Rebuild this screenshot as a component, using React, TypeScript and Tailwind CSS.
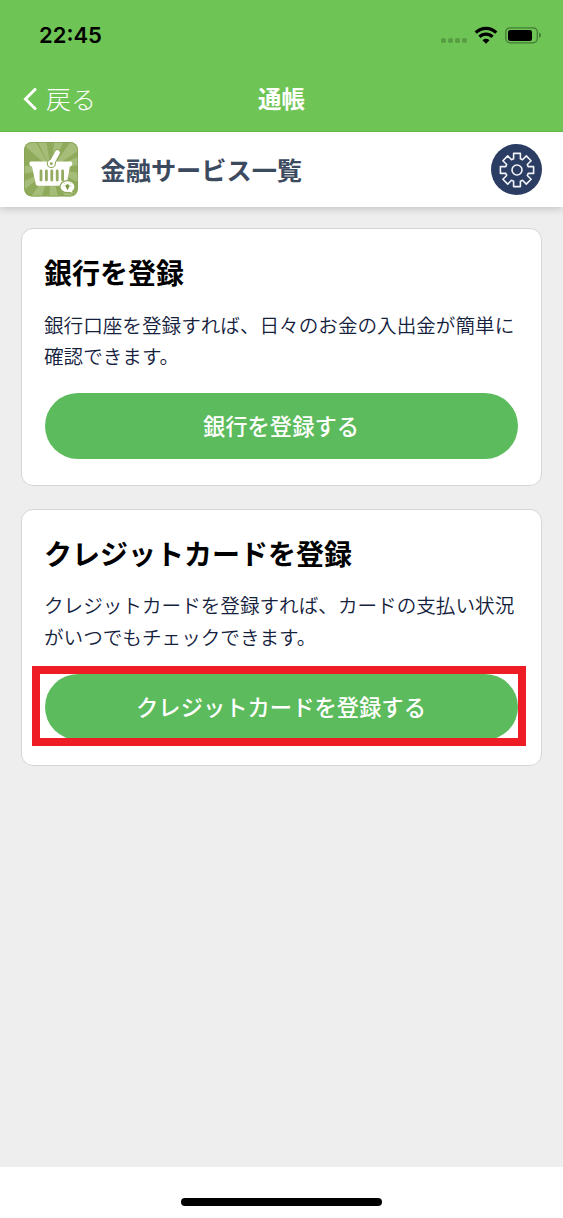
import React from "react";

const services = [
  {
    title: "銀行を登録",
    lines: ["銀行口座を登録すれば、日々のお金の入出金が簡単に", "確認できます。"],
    button: "銀行を登録する",
    highlighted: false,
  },
  {
    title: "クレジットカードを登録",
    lines: ["クレジットカードを登録すれば、カードの支払い状況", "がいつでもチェックできます。"],
    button: "クレジットカードを登録する",
    highlighted: true,
  },
];

function StatusIcons() {
  return (
    <svg width="102" height="20" viewBox="0 0 102 20">
      <g fill="#579f42">
        <rect x="1" y="13" width="5" height="5" rx="1.8" />
        <rect x="8" y="13" width="5" height="5" rx="1.8" />
        <rect x="15" y="13" width="5" height="5" rx="1.8" />
        <rect x="22" y="13" width="5" height="5" rx="1.8" />
      </g>
      <g fill="none" stroke="#000" strokeWidth="3.2">
        <path d="M35.7 7.6a14.6 14.6 0 0 1 20.6 0" />
        <path d="M39.5 11.9a9.2 9.2 0 0 1 13 0" />
      </g>
      <path d="M42.5 15.3a5 5 0 0 1 7 0L46 18.800z" fill="#000" />
      <rect x="65.8" y="2.8" width="31.5" height="15" rx="4.2" fill="none" stroke="#447b34" strokeWidth="1.3" />
      <rect x="68" y="5" width="24" height="11" rx="2.2" fill="#000" />
      <path d="M99 7.6c2.6.8 2.6 4.6 0 5.4z" fill="#447b34" />
    </svg>
  );
}

function BasketIcon() {
  return (
    <svg width="54" height="55" viewBox="0 0 54 55">
      <defs>
        <clipPath id="tile">
          <rect width="54" height="54.5" rx="8" />
        </clipPath>
      </defs>
      <g clipPath="url(#tile)">
        <rect width="54" height="55" fill="#90aa5c" />
        <path
          d="M27 27L-6-2V-14L4-14zM27 27L10-8L21-8zM27 27L31-6H42zM27 27L51-6L64 2zM27 27L62 11V22zM27 27L62 32V44zM27 27L58 58L46 64zM27 27L36 62H25zM27 27L15 62L3 60zM27 27L-8 54V43zM27 27L-8 33V22z"
          fill="#a5bd78"
        />
        <rect x="0.5" y="0.5" width="53" height="53.5" rx="7.5" fill="none" stroke="#849d53" strokeOpacity="0.6" />
      </g>
      <path d="M7 19.400h39.500c1.500 0 2 .9 1.800 2.400-.3 1.800-1 2.500-2.400 2.700l-3.200 17.300c-.3 1.500-1 2-2.300 2H14c-1.300 0-2-.5-2.300-2L8 24.500C6.500 24.300 5.700 23.600 5.400 21.800c-.2-1.500.2-2.400 1.600-2.400z" fill="#fff" />
      <path d="M17 29v9M22.400 29v9M27.800 29v9M33.200 29v9M38.600 29v9" stroke="#94ab61" strokeWidth="2.8" strokeLinecap="round" />
      <path d="M28 20.500L33.500 10.500" stroke="#8fa85b" strokeWidth="6.6" strokeLinecap="round" />
      <circle cx="27.3" cy="21.400" r="4.600" fill="#8fa85b" />
      <path d="M28 20.500L33.500 10.500" stroke="#fff" strokeWidth="4.8" strokeLinecap="round" />
      <circle cx="27.3" cy="21.400" r="3.5" fill="#fff" />
      <circle cx="27.3" cy="21.700" r="1.4" fill="#8fa85b" />
      <path d="M43.500 38.700c4.300 0 7.500 2.700 7.500 6 0 1.900-.9 3.400-2.300 4.500l.6 2.900-3.400-1.600c-.8.200-1.600.2-2.400.2-4.300 0-7.500-2.700-7.500-6s3.200-6 7.500-6z" fill="#fff" stroke="#8fa85b" strokeWidth="1.2" />
      <path d="M43.500 42.200c1.200 0 2 .8 2 1.800 0 1.100-1 1.600-1.100 2.500l-.9 1.800-.9-1.800c-.1-.9-1.100-1.400-1.100-2.500 0-1 .8-1.800 2-1.800z" fill="#78983f" />
      <path d="M41 41.800l-.6-.5M46 41.800l.6-.5M40.400 44h-.8M46.600 44h.8" stroke="#84a04e" strokeWidth="0.6" />
    </svg>
  );
}

function GearIcon() {
  return (
    <svg width="36" height="36" viewBox="0 0 36 36" fill="none" stroke="#f1f4f9" strokeWidth="1.6" strokeLinejoin="round">
      <path d="M14.600 1.400H21.400V6.800L23.500 7.700L27.300 3.900L32.100 8.700L28.300 12.500L29.200 14.600H34.600V21.400H29.200L28.300 23.500L32.100 27.300L27.300 32.100L23.500 28.300L21.400 29.200V34.600H14.600V29.200L12.500 28.300L8.700 32.100L3.900 27.300L7.700 23.500L6.800 21.400H1.400V14.600H6.800L7.700 12.500L3.900 8.700L8.700 3.900L12.500 7.700L14.600 6.800z" />
      <circle cx="18" cy="18" r="5" />
    </svg>
  );
}

export default function App() {
  return (
    <div className="flex h-[1218px] w-[563px] flex-col overflow-hidden bg-[#eeeeee] font-['Noto_Sans_CJK_JP',sans-serif]">
      <header className="z-20 h-[132px] shrink-0 border-b border-[#62b748] bg-[#6ec455]">
        <div className="flex h-[69px] items-center justify-between pr-[21px] pl-[39px]">
          <span className="font-['Inter',sans-serif] text-[22px] leading-none font-semibold">22:45</span>
          <StatusIcons />
        </div>
        <div className="grid h-[59px] grid-cols-3 items-center text-white">
          <div className="flex items-center pl-[23px]">
            <svg width="14" height="22" viewBox="0 0 14 22" fill="none" stroke="#fff" strokeWidth="3">
              <path d="M12 1.5L2.5 11L12 20.5" strokeLinecap="round" />
            </svg>
            <span className="ml-[9px] text-[25px] leading-none font-light">戻る</span>
          </div>
          <h1 className="text-center text-[23.5px] leading-none font-bold">通帳</h1>
        </div>
      </header>

      <div className="z-10 flex h-[75px] shrink-0 items-center bg-white pr-[21px] pl-6 shadow-[0_1px_8px_rgba(0,0,0,0.22)]">
        <BasketIcon />
        <h2 className="ml-[22.5px] text-[25.2px] leading-none font-bold text-[#3c4a60]">金融サービス一覧</h2>
        <div className="ml-auto flex size-[51px] items-center justify-center rounded-full bg-[#2c3d63]">
          <GearIcon />
        </div>
      </div>

      <main className="flex flex-1 flex-col gap-[23px] px-[21px] pt-[21px]">
        {services.map((service) => (
          <section key={service.title} className="h-[257.5px] rounded-[12px] border border-[#d5d5d5] bg-white px-[22px] pt-[23px]">
            <h3 className="text-[28px] leading-[41px] font-bold text-black">{service.title}</h3>
            <div className="mt-[15.5px] text-[19.6px] leading-[31.5px] font-[350] whitespace-nowrap text-[#14213d]">
              {service.lines.map((line) => (
                <p key={line}>{line}</p>
              ))}
            </div>
            <div className="relative mt-[21.5px] ml-px">
              <button className="block h-[66px] w-[473px] rounded-full bg-[#5cbb5c] pr-px text-[22.3px] font-medium text-white">
                {service.button}
              </button>
              {service.highlighted && (
                <div className="absolute -top-[7.5px] -left-[13px] h-20 w-[494px] border-8 border-[#ee1c24]" />
              )}
            </div>
          </section>
        ))}
      </main>

      <footer className="flex h-[51px] shrink-0 items-end justify-center bg-white pb-3">
        <div className="h-2 w-[201px] rounded-full bg-black" />
      </footer>
    </div>
  );
}
